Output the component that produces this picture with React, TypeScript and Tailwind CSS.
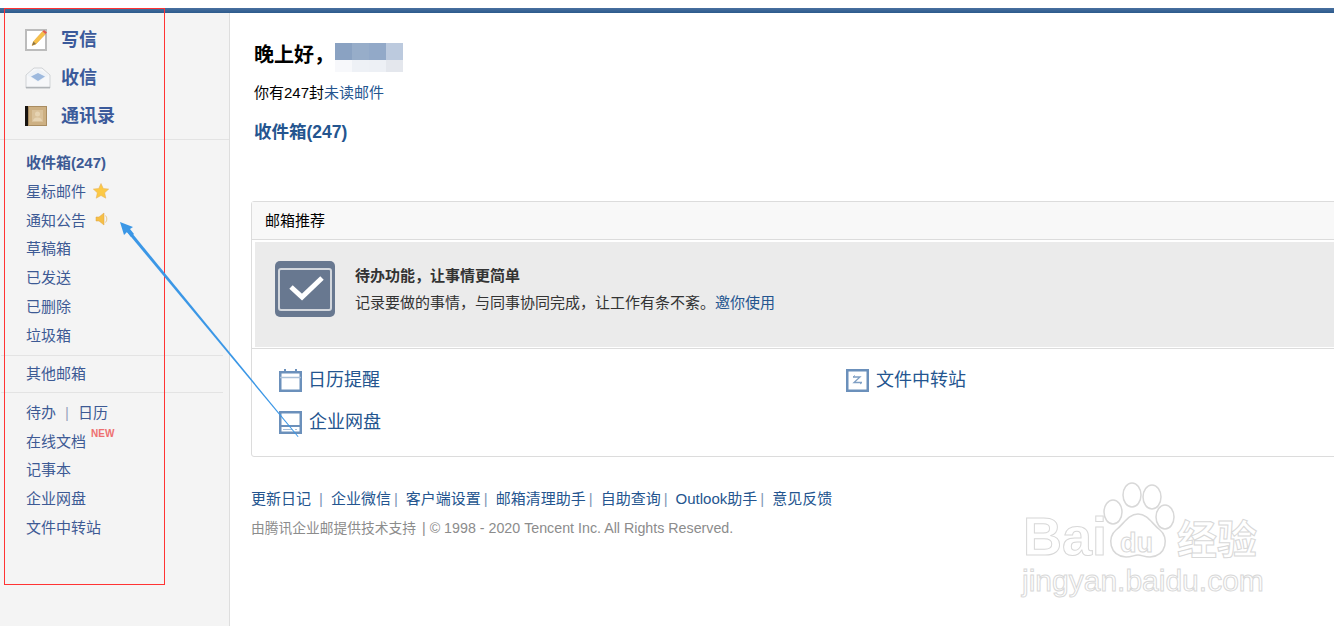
const primary = [
  { label: "写信", icon: <ComposeIcon /> },
  { label: "收信", icon: <InboxIcon /> },
  { label: "通讯录", icon: <ContactIcon /> },
];

const folders = ["草稿箱", "已发送", "已删除", "垃圾箱"];
const tools = ["记事本", "企业网盘", "文件中转站"];
const footerLinks = ["企业微信", "客户端设置", "邮箱清理助手", "自助查询", "Outlook助手"];

function ComposeIcon() {
  return (
    <svg width="24" height="24" viewBox="0 0 24 24">
      <rect x="1" y="2" width="20" height="20" fill="#fff" stroke="#bcbcbc" strokeWidth="2" />
      <path d="M7 17.500l1.500-4L17.500 3.500l3 2.500-9.500 10z" fill="#f7c04a" stroke="#e0a030" strokeWidth=".5" />
      <path d="M17.500 3.500l1.500-1.500 3 2.500-1.500 1.500z" fill="#e2574c" />
      <path d="M7 17.500l1.500-4 2.500 2.500z" fill="#8a7448" />
    </svg>
  );
}

function InboxIcon() {
  return (
    <svg width="26" height="24" viewBox="0 0 26 24">
      <path d="M1 9L9 2h8l8 7v13H1z" fill="#f6f7f9" stroke="#d0d3d6" />
      <path d="M2 9l11-6 11 6-11 7z" fill="#eef2f7" />
      <path d="M6 10.500l7-3.500 7 3.500-7 4.500z" fill="#9db9de" />
      <path d="M1 21.500h24" stroke="#b0b4b8" strokeWidth="1.500" />
    </svg>
  );
}

function ContactIcon() {
  return (
    <svg width="22" height="20" viewBox="0 0 22 20">
      <rect width="22" height="20" fill="#c9ab7c" />
      <rect width="3" height="20" fill="#17130f" />
      <rect x="3.500" y=".5" width="18" height="19" fill="#cdb083" stroke="#a98c60" />
      <rect x="7" y="4" width="11" height="12" fill="#d9c19a" />
      <circle cx="12.500" cy="8" r="2.500" fill="#e6d3b2" />
      <path d="M8 15c.5-3 2.500-3.500 4.500-3.500s4 .5 4.500 3.500z" fill="#e6d3b2" />
    </svg>
  );
}

function StarIcon() {
  return (
    <svg width="16" height="16" viewBox="0 0 16 16">
      <path d="M8 .5l2.300 5 5.400.6-4 3.700 1.100 5.400L8 12.500 3.200 15.200l1.100-5.400-4-3.700 5.400-.6z" fill="#fcc945" stroke="#e5ae5a" strokeWidth=".5" />
    </svg>
  );
}

function SpeakerIcon() {
  return (
    <svg width="14" height="14" viewBox="0 0 14 14">
      <path d="M1 5h3l5-4v12L4 9H1z" fill="#f6bf45" stroke="#dfa544" strokeWidth=".5" />
      <path d="M10.500 3.500c1.800 2 1.800 5 0 7" fill="none" stroke="#e9c88c" />
    </svg>
  );
}

function CalendarIcon() {
  return (
    <svg width="23" height="23" viewBox="0 0 23 23" fill="none" stroke="#6b90bb" strokeWidth="2.500">
      <rect x="1.250" y="3.250" width="20.500" height="18.500" />
      <path d="M1 8.500h21" stroke="#a9bfd7" strokeWidth="1.500" />
      <path d="M6 0v4M17 0v4" strokeWidth="2" />
    </svg>
  );
}

function TransferIcon() {
  return (
    <svg width="23" height="23" viewBox="0 0 23 23" fill="none">
      <rect x="1.250" y="1.250" width="20.500" height="20.500" stroke="#6b90bb" strokeWidth="2.500" />
      <path d="M7 8h7l-6 5.500h8" stroke="#7f9fc4" strokeWidth="1.300" />
      <path d="M7 8l2-1.500M16 13.500l-2 1.500" stroke="#7f9fc4" />
    </svg>
  );
}

function DiskIcon() {
  return (
    <svg width="23" height="23" viewBox="0 0 23 23" fill="none" stroke="#6b90bb" strokeWidth="2.500">
      <rect x="1.250" y="1.250" width="20.500" height="20.500" />
      <path d="M1 15h21" strokeWidth="2" />
      <path d="M4 18.500h9M16 18.500h2" stroke="#a9bfd7" strokeWidth="1" />
    </svg>
  );
}

function TodoIcon() {
  return (
    <svg width="60" height="56" viewBox="0 0 60 56">
      <rect width="60" height="56" rx="5" fill="#687890" />
      <rect x="4" y="8" width="52" height="41" rx="2" fill="none" stroke="#d3d7dd" strokeWidth="2" />
      <path d="M16 26l11 10 20-19" fill="none" stroke="#fff" strokeWidth="5" />
    </svg>
  );
}

function Watermark() {
  const outline = "text-white [-webkit-text-stroke:1px_#d8d8d8] [font-family:'Liberation_Sans',sans-serif] font-bold";
  return (
    <div className="absolute left-[1022px] top-[482px] h-[116px] w-[240px]">
      <svg className="absolute left-[72px] top-0" width="92" height="80" viewBox="0 0 92 80" fill="#fff" stroke="#d8d8d8" strokeWidth="1.500">
        <ellipse cx="19" cy="30" rx="9" ry="12" />
        <ellipse cx="38" cy="13" rx="9" ry="12" />
        <ellipse cx="58" cy="15" rx="9" ry="12" />
        <ellipse cx="71" cy="35" rx="9" ry="12" />
        <path d="M44 32c10 0 14 10 22 16 9 7 7 26-10 27-6 0-8-2-12-2s-6 2-12 2c-17-1-19-20-10-27 8-6 12-16 22-16z" />
      </svg>
      <span className={`absolute left-[1px] top-[24px] text-[54px] leading-[60px] ${outline}`}>Bai</span>
      <span className={`absolute left-[98px] top-[46px] text-[27px] leading-[30px] ${outline}`}>du</span>
      <span className="absolute left-[155px] top-[31px] text-[40px] leading-[48px] font-bold text-white [-webkit-text-stroke:1px_#d8d8d8] [font-family:'Noto_Sans_CJK_SC',sans-serif]">经验</span>
      <span className="absolute left-0 top-[81px] text-[30px] leading-[36px] text-white [-webkit-text-stroke:1px_#d8d8d8] [font-family:'Liberation_Sans',sans-serif]">jingyan.baidu.com</span>
    </div>
  );
}

function BlurPatch() {
  return (
    <div className="grid h-[29px] w-[68px] grid-cols-4 grid-rows-[17px_12px]">
      <div className="bg-[#8aa2c2]" />
      <div className="bg-[#97adc9]" />
      <div className="bg-[#92a9c8]" />
      <div className="bg-[#bccade]" />
      <div className="bg-[#f7f8fb]" />
      <div className="bg-[#eef1f6]" />
      <div className="bg-[#edf0f5]" />
      <div className="bg-[#e4e7ed]" />
    </div>
  );
}

export default function App() {
  return (
    <div className="relative h-[626px] w-[1334px] overflow-hidden bg-white pt-2 [font-family:'Liberation_Sans','Noto_Sans_CJK_SC',sans-serif] text-[15px]">
      <div className="h-[5px] bg-gradient-to-b from-[#48709f] to-[#2c5a8c]" />

      <div className="flex h-[613px]">
        <aside className="w-[230px] shrink-0 border-r border-[#dedede] bg-[#f4f4f4] text-[#3d5a94]">
          <div className="border-b border-[#e3e3e3] pb-[4px] pt-[8px]">
            {primary.map((item) => (
              <div key={item.label} className="flex h-[38px] items-center pl-[25px]">
                <span className="flex w-[36px] items-center">{item.icon}</span>
                <span className="text-lg font-bold text-[#3b5a9b]">{item.label}</span>
              </div>
            ))}
          </div>

          <div className="pl-[26px] pt-[9px]">
            <div className="flex h-[29px] items-center font-bold">收件箱(247)</div>
            <div className="flex h-[29px] items-center gap-[7px]">
              星标邮件 <span className="-mt-[3px] flex"><StarIcon /></span>
            </div>
            <div className="flex h-[28px] items-center gap-[9px]">
              通知公告 <span className="-mt-[4px] flex"><SpeakerIcon /></span>
            </div>
            {folders.map((name) => (
              <div key={name} className="flex h-[29px] items-center">{name}</div>
            ))}
          </div>

          <div className="ml-[1px] mr-[6px] mt-[4px] border-t border-[#e3e3e3] pl-[25px] pt-[4px]">
            <div className="flex h-[29px] items-center">其他邮箱</div>
          </div>

          <div className="ml-[1px] mr-[6px] mt-[3px] border-t border-[#e3e3e3] pl-[25px] pt-[6px]">
            <div className="flex h-[29px] items-center gap-[9px]">
              待办 <span className="text-[#9aa5bd]">|</span> 日历
            </div>
            <div className="relative flex h-[28px] items-center">
              在线文档
              <span className="absolute left-[65px] top-[1px] text-[10px] font-bold leading-[10px] text-[#ee7070]">NEW</span>
            </div>
            {tools.map((name) => (
              <div key={name} className="flex h-[29px] items-center">{name}</div>
            ))}
          </div>
        </aside>

        <main className="min-w-0 flex-1 pl-[21px]">
          <div className="pl-[3px]">
            <div className="mt-[30px] flex h-[29px] items-center">
              <h1 className="-mt-[5px] w-[81px] text-xl font-bold text-black">晚上好，</h1>
              <BlurPatch />
            </div>
            <p className="mt-[10px] h-[21px] leading-[21px] text-black">
              你有247封<span className="text-[#24558f]">未读邮件</span>
            </p>
            <h2 className="mt-[17px] text-[17.5px] font-bold leading-[24px] text-[#24558f]">收件箱(247)</h2>
          </div>

          <section className="mt-[57px] h-[256px] w-[1100px] rounded-[3px] border border-[#dcdcdc]">
            <div className="h-[38px] border-b border-[#dcdcdc] bg-[#f8f8f8] pl-[13px] leading-[37px] text-black">邮箱推荐</div>
            <div className="ml-[3px] mt-[2px] flex h-[105px] items-start gap-[20px] bg-[#ebebeb] pl-[20px] pt-[19px]">
              <TodoIcon />
              <div className="pt-[3px] text-[#333]">
                <div className="h-[24px] font-bold leading-[24px]">待办功能，让事情更简单</div>
                <div className="leading-[30px]">
                  记录要做的事情，与同事协同完成，让工作有条不紊。<span className="text-[#24558f]">邀你使用</span>
                </div>
              </div>
            </div>
            <div className="mt-[1px] border-t border-[#dcdcdc] pl-[27px] pt-[19px] text-lg text-[#24558f]">
              <div className="flex h-[24px] items-center">
                <div className="flex w-[567px] items-center gap-[6px]"><CalendarIcon />日历提醒</div>
                <div className="flex items-center gap-[7px]"><TransferIcon />文件中转站</div>
              </div>
              <div className="mt-[18px] flex h-[24px] items-center gap-[7px]"><DiskIcon />企业网盘</div>
            </div>
          </section>

          <div className="mt-[32px] flex h-[21px] items-center text-[#24558f]">
            更新日记<span className="mx-[8px] text-[#7f98b8]">|</span>
            {footerLinks.map((label) => (
              <span key={label} className="flex items-center">
                {label}<span className="ml-[3px] mr-[8px] text-[#7f98b8]">|</span>
              </span>
            ))}
            意见反馈
          </div>
          <p className="mt-[8px] h-[20px] text-[14.25px] leading-[20px] text-[#8c8c8c]">
            <span className="text-[13.75px]">由腾讯企业邮提供技术支持</span> <span className="ml-[2px]">|</span> © 1998 - 2020 Tencent Inc. All Rights Reserved.
          </p>
        </main>
      </div>

      {/* screenshot annotations, they sit on top of the page */}
      <div className="pointer-events-none absolute left-[4px] top-[8px] h-[577px] w-[161px] border border-[#ff3333]" />
      <svg className="pointer-events-none absolute left-0 top-0" width="1334" height="626" fill="#3b97e6">
        <path d="M120 222l13 5-3 2 4 5-3 3-4-5-3 3z" />
        <path d="M127 232l2.500-2 169 206.500-.7.500z" />
      </svg>
      <Watermark />
    </div>
  );
}
